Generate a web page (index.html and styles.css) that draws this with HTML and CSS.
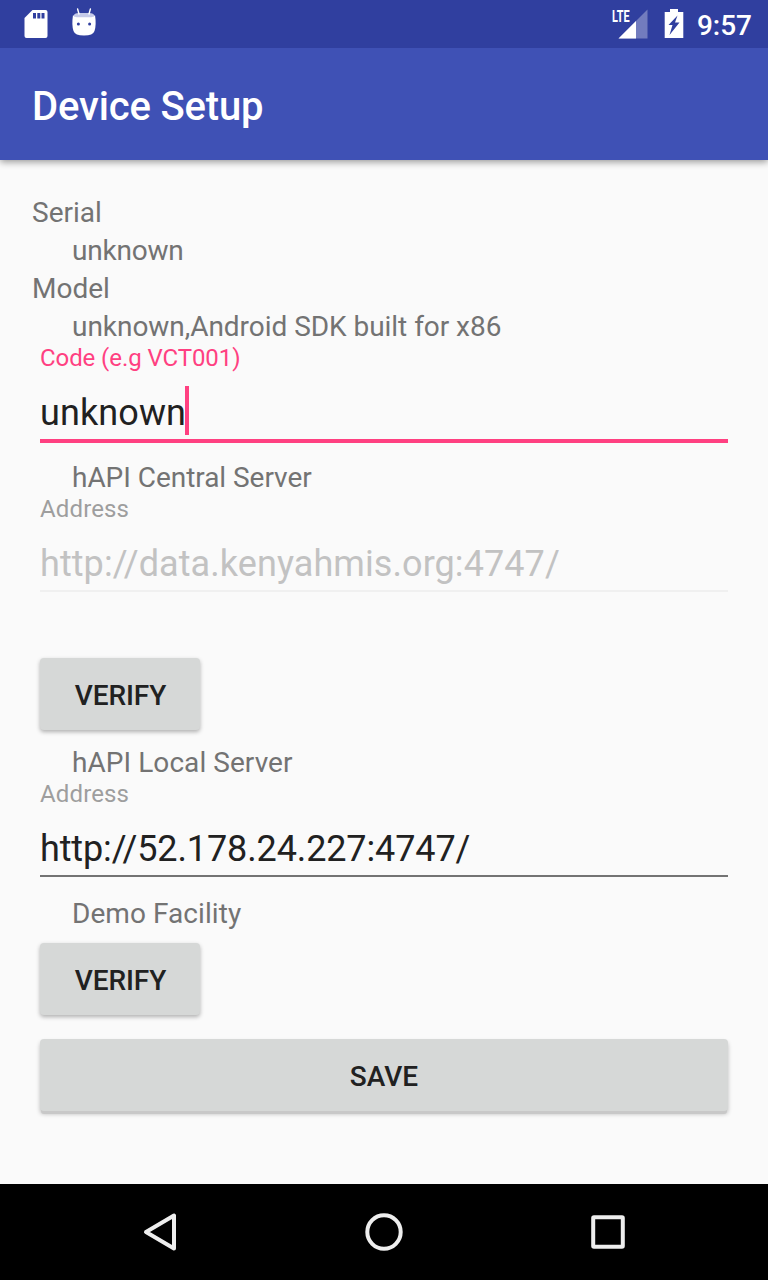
FILE: index.html
```html
<!DOCTYPE html>
<html lang="en">
<head>
<meta charset="utf-8">
<title>Device Setup</title>
<link rel="stylesheet" href="styles.css">
</head>
<body>
<div class="screen">
  <div class="status-bar">
    <svg class="status-left" width="110" height="48" viewBox="0 0 110 48">
      <path fill="#fff" fill-rule="evenodd" d="M32.5 10H45.5Q47.5 10 47.5 12V36Q47.5 38 45.5 38H26.5Q24.500 38 24.500 36V18ZM33 13V18.500H36V13ZM37.300 13V18.500H40.300V13ZM41.500 13V18.500H44.500V13Z"/>
      <path fill="#c5cae9" d="M73.500 16Q74 13 79 13H89Q94 13 94.500 16L92 18H76Z"/>
      <path stroke="#fff" stroke-width="1.400" stroke-linecap="round" d="M77.600 9L79 14M90.400 9L89 14"/>
      <path fill="#fff" d="M73 15Q74 17.300 79 17.300H89Q94 17.300 95 15Q96.500 25 94.500 31Q93 35.500 84 35.500Q75 35.500 73.500 31Q71.500 25 73 15Z"/>
      <circle cx="78.400" cy="24" r="1.500" fill="#303f9f"/><circle cx="89.600" cy="24" r="1.500" fill="#303f9f"/>
    </svg>
    <div class="status-right">
      <div class="signal">
        <span class="lte">LTE</span>
        <svg width="36" height="48" viewBox="0 0 36 48">
          <path fill="#fff" fill-opacity=".32" d="M35.500 9.500V38.500H6.500Z"/>
          <path fill="#fff" d="M24 21V38.500H6.500Z"/>
        </svg>
      </div>
      <svg class="battery" width="20" height="48" viewBox="0 0 20 48">
        <path fill="#fff" fill-rule="evenodd" d="M6 9H14V12H19.300V38H.700V12H6ZM13.500 15.500L4.500 25H8.500L5.500 35L15.500 22.500H11Z"/>
      </svg>
      <span class="clock">9:57</span>
    </div>
  </div>
  <header class="app-bar"><h1>Device Setup</h1></header>
  <main class="content">
    <div class="row heading">Serial</div>
    <div class="row name">unknown</div>
    <div class="row heading">Model</div>
    <div class="row model">unknown,Android SDK built for x86</div>
    <div class="field focused">
      <div class="label">Code (e.g VCT001)</div>
      <div class="value"><span class="typed">unknown<i class="caret"></i></span></div>
    </div>
    <div class="row model">hAPI Central Server</div>
    <div class="field disabled">
      <div class="label">Address</div>
      <div class="value">http://data.kenyahmis.org:4747/</div>
    </div>
    <div class="row"></div>
    <button class="button verify">VERIFY</button>
    <div class="row local">hAPI Local Server</div>
    <div class="field local-address">
      <div class="label">Address</div>
      <div class="value">http://52.178.24.227:4747/</div>
    </div>
    <div class="row local">Demo Facility</div>
    <button class="button verify">VERIFY</button>
    <button class="button save">SAVE</button>
  </main>
  <nav class="nav-bar">
    <svg width="48" height="48" viewBox="0 0 48 48"><path d="M38 7.500V40.500L10 24Z"/></svg>
    <svg width="48" height="48" viewBox="0 0 48 48"><circle cx="24" cy="24" r="16.700"/></svg>
    <svg width="48" height="48" viewBox="0 0 48 48"><rect x="9.200" y="9.200" width="29.600" height="29.600" rx=".8"/></svg>
  </nav>
</div>
</body>
</html>
```
FILE: styles.css
```css
* { box-sizing: border-box; }
body { margin: 0; font-family: Roboto, sans-serif; background: #fafafa; }
.screen { width: 768px; height: 1280px; display: flex; flex-direction: column; overflow: hidden; }
.status-bar { position: relative; z-index: 1; height: 48px; flex: none; display: flex; justify-content: space-between; background: #303f9f; }
.status-right { display: flex; padding-right: 16px; }
.signal { position: relative; display: flex; width: 36px; margin-right: 16px; }
.lte { position: absolute; left: 0; top: 8px; font-size: 17px; line-height: 17px; font-weight: 700; color: #fff; transform: scaleX(.64); transform-origin: left; }
.battery { margin-right: 13px; }
.clock { font-size: 28px; line-height: 52px; font-weight: 500; color: #fff; }
.app-bar { height: 112px; flex: none; display: flex; align-items: center; padding: 6px 32px 0; background: #3f51b5; box-shadow: 0 2px 7px rgba(0,0,0,.4); }
h1 { margin: 0; font-size: 40px; line-height: 48px; font-weight: 500; letter-spacing: -.16px; color: #fff; }
.content { flex: 1; padding: 33px 40px 0; }
.row { height: 38px; padding-left: 32px; font-size: 28px; line-height: 40px; color: #737373; white-space: nowrap; }
.heading { padding-left: 0; margin-left: -8px; }
.name { letter-spacing: -.2px; }
.model { letter-spacing: -.04px; }
.local { letter-spacing: .06px; }
.field { height: 113px; }
.label { height: 28px; font-size: 24px; line-height: 26px; letter-spacing: .14px; color: #9e9e9e; }
.value { height: 68px; padding-top: 16px; font-size: 36px; line-height: 48px; color: #212121; white-space: nowrap; box-shadow: inset 0 -2px #737373; }
.focused .label { color: #ff4081; letter-spacing: -.08px; }
.focused .value { height: 70px; letter-spacing: .1px; box-shadow: inset 0 -4px #ff4081; }
.disabled .value { color: #c2c2c2; letter-spacing: .08px; box-shadow: inset 0 -2px #f0f0f0; }
.local-address .value { letter-spacing: -.12px; }
.typed { position: relative; }
.caret { position: absolute; left: 100%; top: -6px; width: 4px; height: 49px; background: #ff4081; margin-left: -1px; }
.button { display: block; height: 72px; padding: 3px 0 0; border: 0; border-radius: 4px; background: #d6d8d7; color: #212121; font: 500 28px/36px Roboto, sans-serif; box-shadow: 0 2px 4px rgba(0,0,0,.3); }
.verify { width: 160px; margin: 11px 0 13px; padding-left: 1px; letter-spacing: -.1px; }
.save { width: 100%; margin-top: 24px; box-shadow: 0 4px 0 -1px #c8c8c8, 0 3px 4px rgba(0,0,0,.25); }
.nav-bar { height: 96px; flex: none; display: flex; align-items: center; justify-content: center; gap: 176px; background: #000; }
.nav-bar svg { fill: none; stroke: #eee; stroke-width: 4; stroke-linejoin: round; }
```
